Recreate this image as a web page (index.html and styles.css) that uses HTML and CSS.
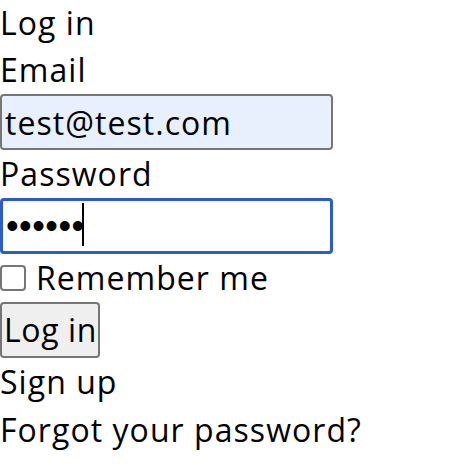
FILE: index.html
```html
<!DOCTYPE html>
<html lang="en">
<head>
<meta charset="utf-8">
<title>Log in</title>
<link rel="stylesheet" href="styles.css">
</head>
<body>
<div class="page">
  <div class="title">Log in</div>
  <form class="form">
    <label class="label" for="email">Email</label>
    <input class="field field-filled" id="email" type="email" value="test@test.com">
    <label class="label" for="password">Password</label>
    <div class="field-wrap">
      <input class="field field-focus" id="password" type="password" value="secret">
      <span class="caret"></span>
    </div>
    <label class="remember"><input type="checkbox" class="check">Remember me</label>
    <button class="btn" type="button">Log in</button>
  </form>
  <a class="link">Sign up</a>
  <a class="link">Forgot your password?</a>
</div>
</body>
</html>
```
FILE: styles.css
```css
html, body {
  margin: 0;
  padding: 0;
  background: #fff;
}
body {
  font-family: "Open Sans", "Liberation Sans", sans-serif;
  font-size: 32px;
  line-height: 48px;
  letter-spacing: 1.05px;
  color: #000;
}
.page {
  display: flex;
  flex-direction: column;
  align-items: flex-start;
}
.title {
  line-height: 46px;
  height: 46px;
}
.form {
  display: flex;
  flex-direction: column;
  align-items: flex-start;
  margin: 0;
}
.label {
  display: block;
  height: 48px;
}
.field {
  box-sizing: border-box;
  width: 333px;
  height: 56px;
  margin: 0;
  padding: 2px 3px;
  border: 2px solid #767676;
  border-radius: 4px;
  background: #fff;
  font: inherit;
  letter-spacing: 1.05px;
  line-height: 48px;
  color: #000;
  outline: none;
}
.field-filled {
  background: #e8f0fe;
}
.field-wrap {
  position: relative;
  display: flex;
}
.field-focus {
  border: 3px solid #2a5ccb;
  padding: 1px 3px;
  font-family: "Liberation Sans", sans-serif;
  font-size: 36px;
  letter-spacing: 0.5px;
}
.caret {
  position: absolute;
  left: 82px;
  top: 5px;
  width: 2px;
  height: 43px;
  background: #000;
}
.remember {
  display: flex;
  align-items: center;
  height: 48px;
}
.check {
  appearance: none;
  -webkit-appearance: none;
  box-sizing: border-box;
  width: 26px;
  height: 26px;
  margin: 0 10px 0 0;
  border: 2px solid #767676;
  border-radius: 4px;
  background: #fff;
}
.btn {
  box-sizing: border-box;
  height: 56px;
  margin: 0;
  padding: 2px 1px 2px 2px;
  border: 2px solid #767676;
  border-radius: 4px;
  background: #efefef;
  font: inherit;
  letter-spacing: 0.6px;
  line-height: 48px;
  color: #000;
}
.link {
  display: block;
  height: 48px;
  color: #000;
  text-decoration: none;
}
```
